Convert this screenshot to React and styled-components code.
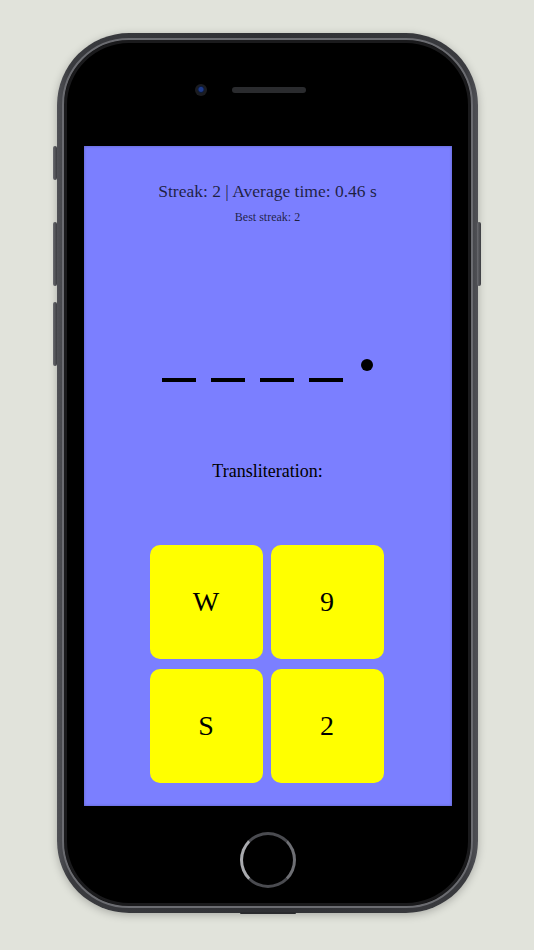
import styled, { createGlobalStyle } from "styled-components";

const Global = createGlobalStyle`
  html, body { margin: 0; padding: 0; background: #e1e3db; }
  #root { width: 534px; height: 950px; }
`;

const Page = styled.div`
  width: 534px;
  height: 950px;
  display: flex;
  justify-content: center;
  align-items: flex-start;
  padding-top: 33px;
  box-sizing: border-box;
  font-family: "Liberation Serif", "Times New Roman", serif;
`;

const Body = styled.div`
  position: relative;
  width: 421px;
  height: 880px;
  margin-left: 1px;
  box-sizing: border-box;
  border-radius: 72px;
  padding: 5px;
  background: linear-gradient(90deg, #505156 0%, #3a3b3f 3%, #2f3034 50%, #3a3b3f 97%, #505156 100%);
  box-shadow: 0 2px 8px rgba(0, 0, 0, 0.25);
`;

const Bezel = styled.div`
  height: 100%;
  box-sizing: border-box;
  border-radius: 67px;
  background: #000;
  border: 2px solid #6b6c71;
  box-shadow: inset 0 0 0 3px #1a1a1c;
  display: flex;
  flex-direction: column;
  align-items: center;
  padding: 0 18px;
`;

const TopBar = styled.div`
  height: 106px;
  box-sizing: border-box;
  display: flex;
  align-items: flex-start;
  justify-content: center;
  gap: 25px;
  padding: 44px 36px 0 0;
`;

const Camera = styled.div`
  width: 12px;
  height: 12px;
  margin-left: 2px;
  border-radius: 50%;
  background: radial-gradient(circle at 50% 45%, #1d3a8a 0 2px, #0d1a3a 3px, #1b1c20 4px);
`;

const Speaker = styled.div`
  width: 74px;
  height: 6px;
  margin-top: 3px;
  border-radius: 3px;
  background: #2a2b2e;
`;

const Screen = styled.div`
  width: 368px;
  height: 660px;
  background: #7b7fff;
  display: flex;
  flex-direction: column;
  align-items: center;
  box-shadow: inset 0 0 3px rgba(0, 0, 0, 0.25);
`;

const Stats = styled.div`
  margin-top: 34px;
  font-size: 17.5px;
  line-height: 22px;
  color: rgba(0, 0, 0, 0.75);
`;

const Best = styled.div`
  margin-top: 8px;
  font-size: 12px;
  line-height: 14px;
  color: rgba(0, 0, 0, 0.75);
`;

const Morse = styled.div`
  margin-top: 130px;
  height: 30px;
  display: flex;
  align-items: flex-end;
  gap: 15px;
`;

const Dash = styled.div`
  width: 34px;
  height: 4px;
  background: #000;
  margin-bottom: 2px;
`;

const Dot = styled.div`
  width: 12px;
  height: 12px;
  border-radius: 50%;
  background: #000;
  margin-left: 3px;
  margin-bottom: 13px;
`;

const Label = styled.div`
  margin-top: 76px;
  font-size: 18px;
  line-height: 22px;
  color: #000;
`;

const Grid = styled.div`
  margin: 63px 2px 0 0;
  display: grid;
  grid-template-columns: 113px 113px;
  grid-auto-rows: 114px;
  gap: 10px 8px;
`;

const Key = styled.button`
  border: none;
  border-radius: 10px;
  background: #ffff00;
  font-family: "Liberation Serif", "Times New Roman", serif;
  font-size: 28px;
  color: #000;
  display: flex;
  align-items: center;
  justify-content: center;
  padding: 0;
  cursor: pointer;
`;

const BottomBar = styled.div`
  flex: 1;
  display: flex;
  align-items: center;
  justify-content: center;
  padding-top: 7px;
`;

const Home = styled.div`
  width: 56px;
  height: 56px;
  border-radius: 50%;
  box-sizing: border-box;
  border: 3px solid #4a4b50;
  border-left-color: #a9aaae;
  border-right-color: #6e6f74;
  background: #000;
`;

const SideButton = styled.div`
  position: absolute;
  width: 4px;
  background: linear-gradient(90deg, #6a6b70, #3c3d41);
  border-radius: 2px;
  top: ${(p) => p.$top}px;
  height: ${(p) => p.$h}px;
  ${(p) => (p.$right ? "right: -3px;" : "left: -4px;")}
`;

const Port = styled.div`
  position: absolute;
  bottom: -1px;
  left: 50%;
  transform: translateX(-50%);
  width: 56px;
  height: 2px;
  border-radius: 1px;
  background: #2a2b2e;
`;

export default function App() {
  const keys = ["W", "9", "S", "2"];
  return (
    <>
      <Global />
      <Page>
        <Body>
          <SideButton $top={113} $h={34} />
          <SideButton $top={189} $h={64} />
          <SideButton $top={269} $h={64} />
          <SideButton $right $top={189} $h={64} />
          <Port />
          <Bezel>
            <TopBar>
              <Camera />
              <Speaker />
            </TopBar>
            <Screen>
              <Stats>Streak: 2 | Average time: 0.46 s</Stats>
              <Best>Best streak: 2</Best>
              <Morse>
                <Dash />
                <Dash />
                <Dash />
                <Dash />
                <Dot />
              </Morse>
              <Label>Transliteration:</Label>
              <Grid>
                {keys.map((k) => (
                  <Key key={k}>{k}</Key>
                ))}
              </Grid>
            </Screen>
            <BottomBar>
              <Home />
            </BottomBar>
          </Bezel>
        </Body>
      </Page>
    </>
  );
}
